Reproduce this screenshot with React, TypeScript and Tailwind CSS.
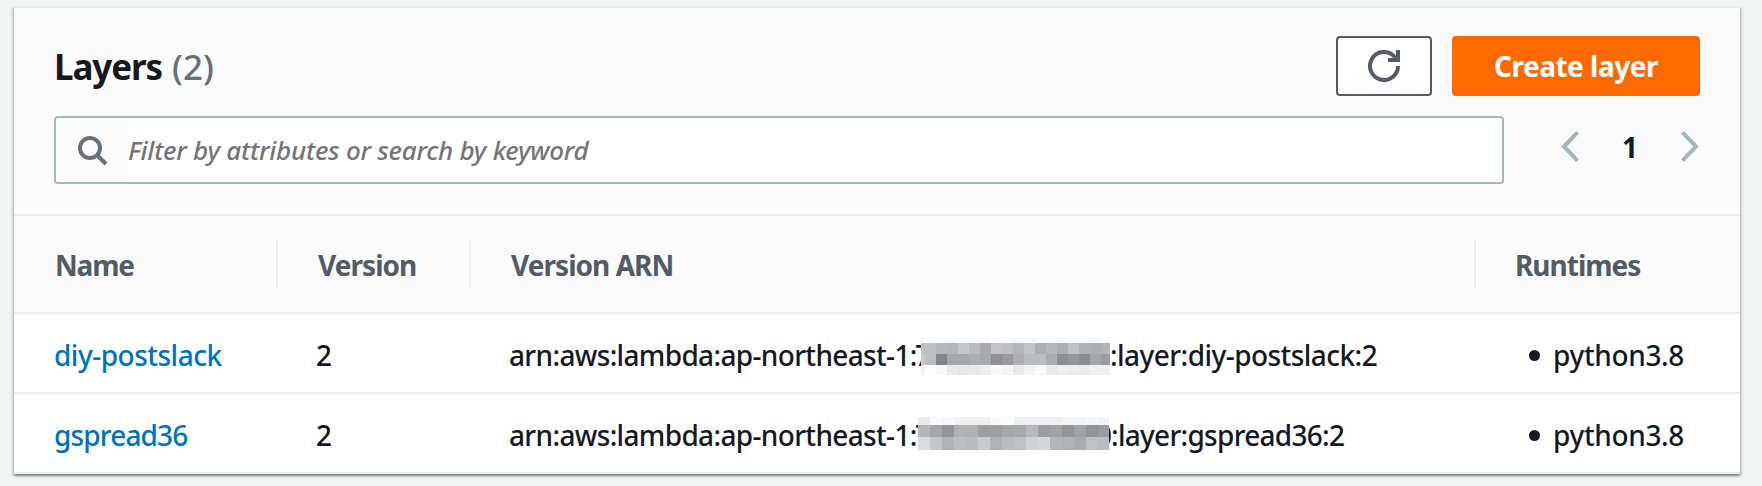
type LayerRow = {
  name: string;
  nameClass: string;
  version: string;
  tail: string;
  tailClass: string;
  runtime: string;
  mask: MaskData;
  headClass: string;
  lastDigit?: string;
};

type MaskData = {
  width: number;
  first: number;
  cell: number;
  rowEdges: number[];
  rows: string[][];
};

const MASK_A: MaskData = {
  width: 189,
  first: 4,
  cell: 11,
  rowEdges: [0, 4.5, 15.5, 26.5, 37],
  rows: [
    "fafafa fcfcfc fefefe f9f9f9 f9f9f9 fafafa fafafa fdfdfd fcfcfc f9f9f9 fafafa fefefe fbfbfb fafafa fafafa fdfdfd f9f9f9 fbfbfb".split(" "),
    "bfc0c1 bebfc0 b6b7b9 b4b5b7 c5c6c8 babbbd aaabb0 c4c4c6 bebfc0 b4b5b9 c3c4c5 aeafb0 b6b7b8 adaeb0 c0c1c2 b0b1b3 aeafb1 b2b3b4".split(" "),
    "c8c8ca bebfc0 838487 a6a7a9 a6a7ac acadaf a8a9ab 8f9094 9a9a9c aeafb0 bbbcbd bcbdbe acadaf 8e8f92 949598 8c8d90 a5a6a8 9b9c9f".split(" "),
    "f1f1f1 fdfdfd f8f8f8 eaebeb e5e8e7 e9ebea efefef f9f9f9 f5f5f5 e9e9e9 f2f3f3 f9f9f9 e9eaea efefef eceded ececec f1f1f1 f1f1f1".split(" "),
  ],
};

const MASK_B: MaskData = {
  width: 191,
  first: 11.5,
  cell: 12,
  rowEdges: [0, 8, 20.3, 32.5, 39],
  rows: [
    "eaeaea fbfbfb f8f8f8 f0f2f1 f0f0f0 efefef fafafa fcfcfc eef0ef efefef f0f0f0 efefef f5f5f5 f2f4f3 f5f7f6 f2f4f4".split(" "),
    "b4b5b6 a6a7ab 929398 b1b2b4 b0b1b2 9d9e9f 9e9fa0 a5a6a7 a7a8a9 b8b9ba 9d9ea3 a1a2a3 959698 a1a2a6 939499 9b9ca0".split(" "),
    "dadbdd c5c6c7 b1b2b4 bebfc0 babbbc c9cacb b1b2b4 bbbcbd bfc0c1 d0d1d2 d5d6d7 b5b6b7 b1b2b4 abacae bfc0c1 bcbdbe".split(" "),
    "ffffff ffffff ffffff ffffff ffffff fcfcfc ffffff ffffff fbfbfb ffffff ffffff fbfbfb ffffff ffffff ffffff ffffff".split(" "),
  ],
};

const LAYERS: LayerRow[] = [
  {
    name: "diy-postslack",
    nameClass: "tracking-[-0.5px]",
    version: "2",
    tail: ":layer:diy-postslack:2",
    tailClass: "tracking-[-0.55px]",
    runtime: "python3.8",
    mask: MASK_A,
    headClass: "w-[6px]",
  },
  {
    name: "gspread36",
    nameClass: "tracking-[-0.85px]",
    version: "2",
    tail: ":layer:gspread36:2",
    tailClass: "tracking-[-0.72px]",
    runtime: "python3.8",
    mask: MASK_B,
    headClass: "w-[3px]",
    lastDigit: "0",
  },
];

function Mask({ data }: { data: MaskData }) {
  const height = data.rowEdges[data.rowEdges.length - 1];
  return (
    <svg
      width={data.width}
      height={height}
      className="mt-[7px] shrink-0"
      shapeRendering="crispEdges"
      aria-hidden="true"
    >
      {data.rows.map((row, r) =>
        row.map((color, c) => {
          const x = c === 0 ? 0 : data.first + (c - 1) * data.cell;
          return (
            <rect
              key={`${r}-${c}`}
              x={x}
              y={data.rowEdges[r]}
              width={c === 0 ? data.first : data.cell}
              height={data.rowEdges[r + 1] - data.rowEdges[r]}
              fill={`#${color}`}
            />
          );
        })
      )}
    </svg>
  );
}

function Header() {
  return (
    <header className="h-[206px] px-[40px] pt-[28px]">
      <div className="flex h-[60px] items-center justify-between">
        <h1 className="flex pt-[2px] text-[35px] leading-[48px] font-bold tracking-[-1.1px] text-[#16191f]">
          Layers
          <span className="ml-[10px] font-medium tracking-[0px] text-[#687078]">(2)</span>
        </h1>
        <div className="flex gap-[20px]">
          <button
            aria-label="Refresh"
            className="flex h-[60px] w-[96px] items-center justify-center rounded-[4px] border-2 border-[#545b64] bg-white"
          >
            <svg width="32" height="32" viewBox="0 0 32 32" fill="none" stroke="#545b64" strokeWidth="4">
              <path d="M30 16a14 14 0 1 1-4-9.8L29 10" />
              <path d="M20 10h10V0" />
            </svg>
          </button>
          <button className="h-[60px] w-[248px] rounded-[4px] bg-[#ff6a00] pt-[1px] text-[28px] leading-[59px] font-bold tracking-[-0.5px] text-white">
            Create layer
          </button>
        </div>
      </div>
      <div className="mt-[20px] flex items-start justify-between">
        <div className="flex h-[68px] w-[1450px] items-stretch rounded-[4px] border-2 border-[#a4b7b7] bg-white p-[2px]">
          <div className="flex w-[70px] items-center bg-[#fafafa] pt-[1px] pl-[20px]">
            <svg width="30" height="30" viewBox="0 0 30 30" fill="none" stroke="#687078" strokeWidth="4">
              <circle cx="12" cy="12" r="10" />
              <path d="M19 19l9 9" />
            </svg>
          </div>
          <div className="text-[26px] leading-[60px] font-medium tracking-[-0.25px] text-[#757575] italic">
            Filter by attributes or search by keyword
          </div>
        </div>
        <nav className="mr-px flex h-[60px] w-[138px] items-center justify-between">
          <svg width="18" height="31" viewBox="0 0 18 31" fill="none" stroke="#a4b7b7" strokeWidth="4">
            <path d="M16.5 1.4L3 15.5l13.5 14.1" />
          </svg>
          <span className="pt-[1px] text-[28px] leading-[40px] font-bold text-[#16191f]">1</span>
          <svg width="18" height="31" viewBox="0 0 18 31" fill="none" stroke="#a4b7b7" strokeWidth="4">
            <path d="M1.5 1.4L15 15.5L1.5 29.6" />
          </svg>
        </nav>
      </div>
    </header>
  );
}

const GRID = "grid grid-cols-[262px_193px_1005px_266px]";

function ColumnHeads() {
  return (
    <div
      className={`${GRID} h-[100px] items-center border-y-2 border-[#eaeded] text-[28px] leading-[48px] font-bold text-[#545b64]`}
    >
      <div className="flex h-[48px] items-center pt-[2px] pl-[41px] tracking-[-1.2px]">Name</div>
      <div className="flex h-[48px] items-center border-l-2 border-[#eaeded] pt-[2px] pl-[40px] tracking-[-0.95px]">
        Version
      </div>
      <div className="flex h-[48px] items-center border-l-2 border-[#eaeded] pt-[2px] pl-[40px] tracking-[-0.95px]">
        Version ARN
      </div>
      <div className="flex h-[48px] items-center border-l-2 border-[#eaeded] pt-[2px] pl-[39px] tracking-[-1px]">
        Runtimes
      </div>
    </div>
  );
}

function Row({ row }: { row: LayerRow }) {
  return (
    <div
      className={`${GRID} h-[80px] items-center border-b-2 border-[#eaeded] bg-white text-[28px] leading-[40px] font-medium text-[#16191f]`}
    >
      <a className={`pt-[4px] pl-[40px] text-[#0073bb] ${row.nameClass}`}>{row.name}</a>
      <div className="pt-[4px] pl-[40px]">{row.version}</div>
      <div className="flex items-center pl-[40px] whitespace-nowrap">
        <span className="w-[406px] shrink-0 pt-[4px] tracking-[-0.66px]">arn:aws:lambda:ap-northeast-1:</span>
        <span className={`h-[44px] shrink-0 overflow-hidden pt-[4px] ${row.headClass}`}>7</span>
        <Mask data={row.mask} />
        {row.lastDigit && (
          <span className="flex h-[44px] w-[2px] shrink-0 justify-end overflow-hidden pt-[4px]">
            <span className="-mr-[1px]">{row.lastDigit}</span>
          </span>
        )}
        <span className={`pt-[4px] ${row.tailClass}`}>{row.tail}</span>
      </div>
      <div className="flex items-center pl-[55px]">
        <span className="mt-[5px] size-[11px] rounded-full bg-[#16191f]" />
        <span className="pt-[4px] pl-[13px] tracking-[-0.35px]">{row.runtime}</span>
      </div>
    </div>
  );
}

export default function App() {
  return (
    <div className="h-[486px] w-[1762px] overflow-hidden bg-[#f2f3f3] px-[14px] pt-[6px] font-['Noto_Sans',sans-serif]">
      <main className="w-[1726px] border-t-2 border-[#eaeded] bg-[#fafafa] shadow-[0_2px_2px_0_rgba(0,28,36,0.3),2px_2px_2px_0_rgba(0,28,36,0.15),-2px_2px_2px_0_rgba(0,28,36,0.15)]">
        <Header />
        <ColumnHeads />
        {LAYERS.map((row) => (
          <Row key={row.name} row={row} />
        ))}
      </main>
    </div>
  );
}
